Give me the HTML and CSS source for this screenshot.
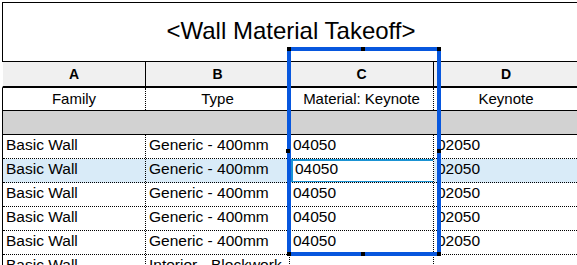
FILE: index.html
```
<!DOCTYPE html>
<html lang="en">
<head>
    <meta charset="UTF-8">
    <meta name="viewport" content="width=device-width, initial-scale=1.0">
    <title>Wall Material Takeoff</title>
    <link rel="stylesheet" href="styles.css">
</head>
<body>
    <div class="schedule">
        <div class="title">&lt;Wall Material Takeoff&gt;</div>

        <div class="row letters">
            <div class="cell">A</div>
            <div class="cell">B</div>
            <div class="cell">C</div>
            <div class="cell">D</div>
        </div>

        <div class="row names">
            <div class="cell">Family</div>
            <div class="cell">Type</div>
            <div class="cell">Material: Keynote</div>
            <div class="cell">Keynote</div>
        </div>

        <div class="group"></div>

        <div class="row data">
            <div class="cell">Basic Wall</div>
            <div class="cell">Generic - 400mm</div>
            <div class="cell">04050</div>
            <div class="cell">02050</div>
        </div>
        <div class="row data current">
            <div class="cell">Basic Wall</div>
            <div class="cell">Generic - 400mm</div>
            <div class="cell editing">04050</div>
            <div class="cell">02050</div>
        </div>
        <div class="row data">
            <div class="cell">Basic Wall</div>
            <div class="cell">Generic - 400mm</div>
            <div class="cell">04050</div>
            <div class="cell">02050</div>
        </div>
        <div class="row data">
            <div class="cell">Basic Wall</div>
            <div class="cell">Generic - 400mm</div>
            <div class="cell">04050</div>
            <div class="cell">02050</div>
        </div>
        <div class="row data">
            <div class="cell">Basic Wall</div>
            <div class="cell">Generic - 400mm</div>
            <div class="cell">04050</div>
            <div class="cell">02050</div>
        </div>
        <div class="row data">
            <div class="cell">Basic Wall</div>
            <div class="cell">Interior - Blockwork</div>
            <div class="cell"></div>
            <div class="cell"></div>
        </div>

        <!-- column C selection -->
        <div class="selection">
            <span class="grip tl"></span>
            <span class="grip tm"></span>
            <span class="grip tr"></span>
            <span class="grip ml"></span>
            <span class="grip mr"></span>
            <span class="grip bl"></span>
            <span class="grip bm"></span>
            <span class="grip br"></span>
        </div>
    </div>
</body>
</html>
```

FILE: styles.css
```
html, body {
    margin: 0;
    background: #fff;
    overflow: hidden;
}
body {
    font-family: "Liberation Sans", Arial, sans-serif;
    color: #000;
}
.schedule {
    position: relative;
    width: 576px;
    margin: 2px 0 0 2px;
    border-left: 1px solid #000;
    border-top: 1px solid #000;
}
.title {
    height: 56px;
    padding-bottom: 2px;
    line-height: 56px;
    font-size: 24px;
    text-align: center;
    border-bottom: 1px solid #000;
}
.row {
    display: grid;
    grid-template-columns: 143px 144px 144px 144px;
}
.cell {
    white-space: nowrap;
    overflow: hidden;
}
.letters {
    margin-left: -1px;
    border-left: 1px solid #fff;
    height: 24px;
    background: #f0f0f0;
    border-bottom: 2px solid #000;
}
.letters .cell {
    padding-top: 1px;
    line-height: 23px;
    font-size: 14px;
    font-weight: bold;
    text-align: center;
    border-right: 1px solid #000;
}
.names {
    height: 22px;
    border-bottom: 1px solid #000;
}
.names .cell {
    line-height: 22px;
    font-size: 15px;
    text-align: center;
    border-right: 1px dotted #000;
}
.letters .cell:last-child,
.names .cell:last-child,
.data .cell:last-child {
    border-right: none;
}
.group {
    height: 23px;
    background: #d2d2d2;
    border-bottom: 1px solid #000;
}
.data {
    height: 23px;
    border-bottom: 1px dotted #000;
}
.data .cell {
    padding: 0 0 4px 3px;
    line-height: 19px;
    font-size: 15.5px;
    border-right: 1px dotted #000;
}
.current {
    background: #d9ebf8;
}
.current .editing {
    position: relative;
    padding-left: 5px;
    background: #fff;
}
.editing::after {
    content: "";
    position: absolute;
    left: 1px;
    top: 0;
    right: -2px;
    bottom: -1px;
    border: 2px solid #1b93d3;
}
.selection {
    position: absolute;
    left: 284px;
    top: 44px;
    width: 146px;
    height: 201px;
    border: 4px solid #0757de;
}
.grip {
    position: absolute;
    width: 4px;
    height: 4px;
    background: #000;
}
.tl { left: -4px; top: -4px; }
.tm { left: 70px; top: -4px; }
.tr { right: -4px; top: -4px; }
.ml { left: -5px; top: 98px; }
.mr { right: -4px; top: 98px; }
.bl { left: -4px; bottom: -4px; }
.bm { left: 70px; bottom: -4px; }
.br { right: -4px; bottom: -4px; }
```
